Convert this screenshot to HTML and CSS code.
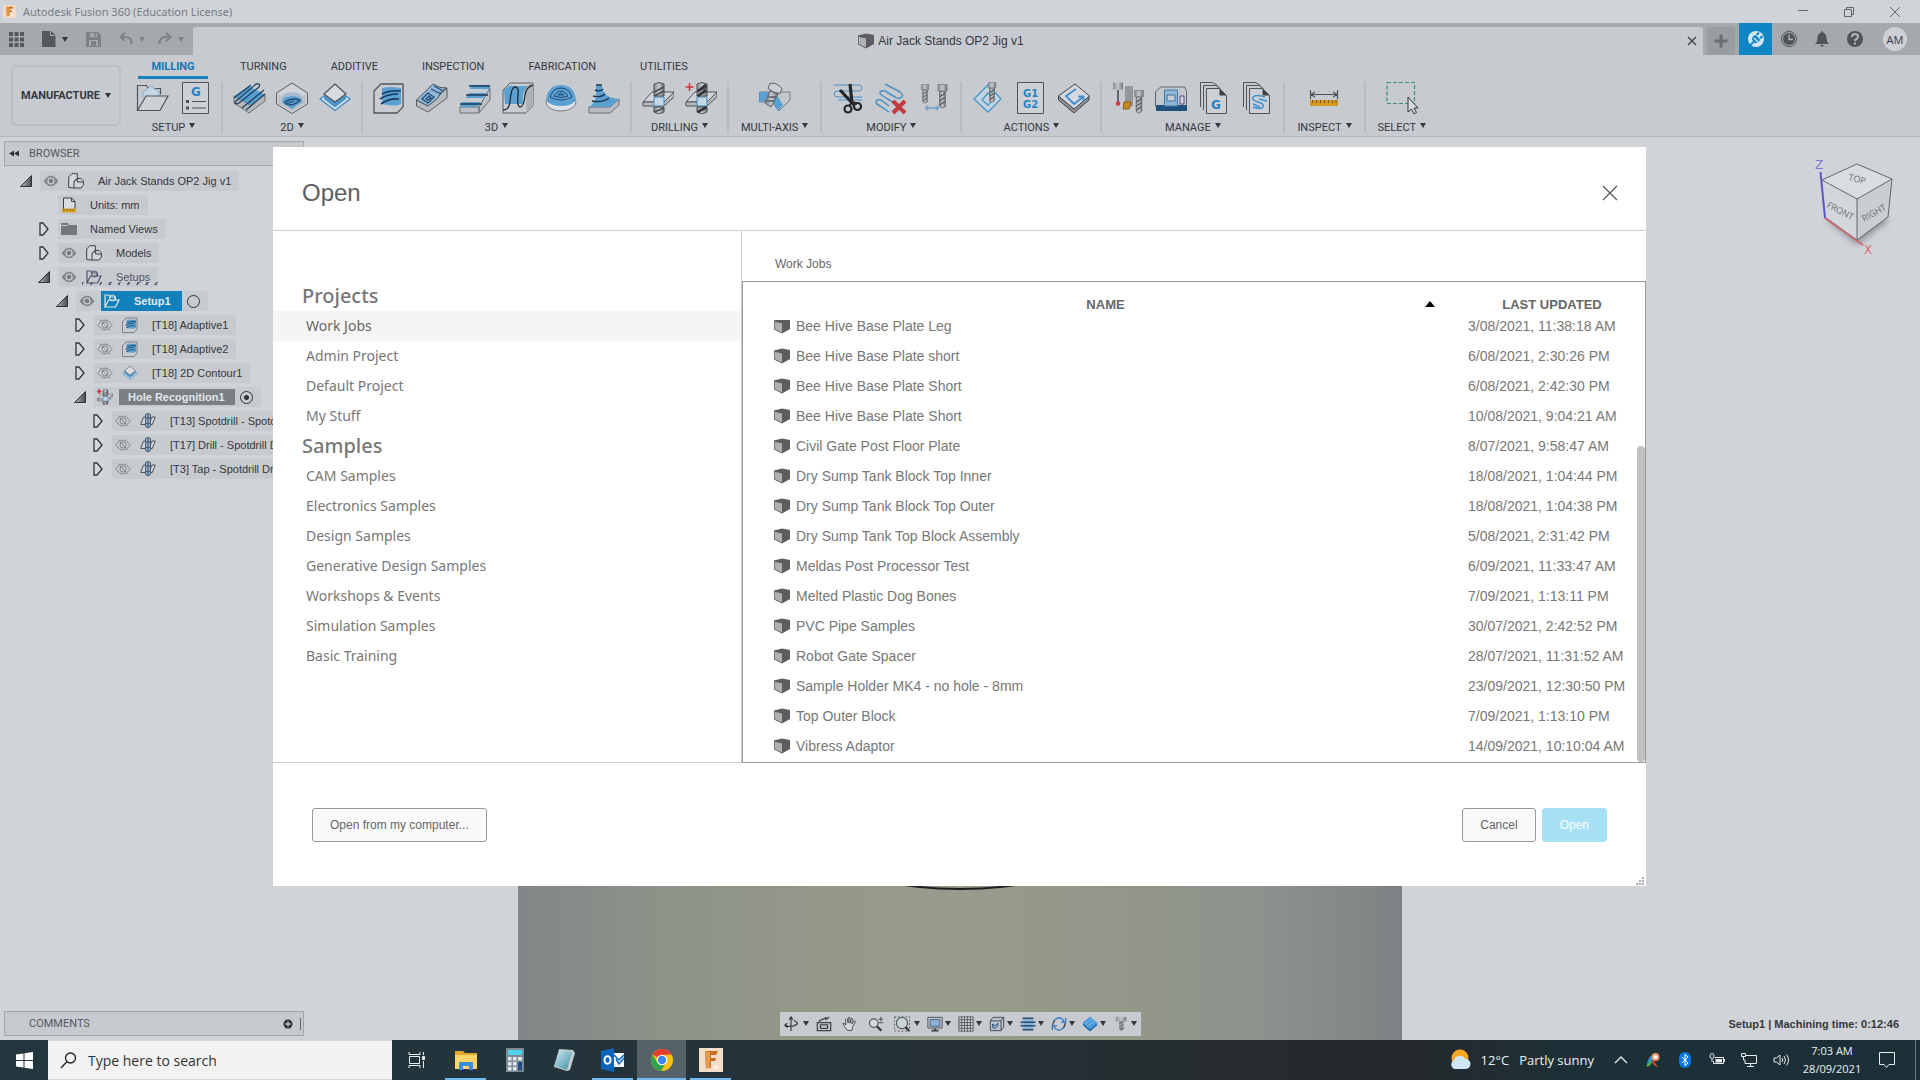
FILE: index.html
```html
<!DOCTYPE html>
<html lang="en">
<head>
    <meta charset="UTF-8">
    <meta name="viewport" content="width=device-width, initial-scale=1.0">
    <title>Autodesk Fusion 360 (Education License)</title>
    <link rel="stylesheet" href="styles.css">
</head>
<body>

    <!-- Shared icons -->
    <svg class="defs" aria-hidden="true">
        <defs>
            <linearGradient id="g-steel" x1="0" x2="1"><stop offset="0" stop-color="#8b8f94"/><stop offset=".5" stop-color="#c3c6ca"/><stop offset="1" stop-color="#74787d"/></linearGradient>
            <linearGradient id="g-tri" x1="0" x2="1"><stop offset="0" stop-color="#b5b8bc"/><stop offset="1" stop-color="#4a4d52"/></linearGradient>
            <linearGradient id="g-note" x1="0" x2="1" y2="1"><stop offset="0" stop-color="#d5eef4"/><stop offset="1" stop-color="#3f8ba3"/></linearGradient>
        </defs>
        <symbol id="cube" viewBox="0 0 16 16">
            <path d="M0 2.500 8 0.500 16 2 16 11 8 15.500 0 11.500z" fill="#5d5d60"/>
            <path d="M0.700 3.800 8 5.500V14.500L0.700 11z" fill="#b0b1b3"/>
        </symbol>
        <symbol id="eye" viewBox="0 0 16 16">
            <path d="M0.500 8Q8-2.500 15.500 8 8 18.500 0.500 8z" fill="#84888d"/>
            <circle cx="8" cy="8" r="3.600" fill="#c9ccd1"/><circle cx="8" cy="8" r="2.300" fill="#777b80"/>
        </symbol>
        <symbol id="eye-off" viewBox="0 0 16 16">
            <g fill="none" stroke="#84888d"><path d="M0.700 8Q8-2 15.300 8 8 18 0.700 8z"/><circle cx="8" cy="8" r="3"/><path d="M2.500 2.500 13.500 13.500"/></g>
        </symbol>
        <symbol id="open" viewBox="0 0 12 12"><path d="M0.500 11.500H11.500V0.500z" fill="url(#g-tri)" stroke="#2d3035"/></symbol>
        <symbol id="closed" viewBox="0 0 10 14"><path d="M1 1v12h3l5-6-5-6z" fill="#d5d8dc" stroke="#33363b" stroke-width="1.300"/></symbol>
        <symbol id="part" viewBox="0 0 16 16">
            <path d="M0.700 14.500V4L4 0.700h5.300v5L6 8.500v6.500zM6 8.500l3-3h4l2.300 2.300v4.500L13 15H6M9.300 5.500v3.500h6" fill="#d3d6da" stroke="#3d4147"/>
        </symbol>
        <symbol id="folder-open" viewBox="0 0 16 16">
            <path d="M1 14V2h4l1 2h5v3M1 14 4.500 7H15l-3.500 7z" fill="none" stroke="currentColor" stroke-width="1.200"/><circle cx="8.500" cy="5" r="3" fill="none" stroke="currentColor"/>
        </symbol>
        <symbol id="adaptive" viewBox="0 0 32 32">
            <path d="M1 9 8 2h22v23l-6 6H1z" fill="#c9ccd0" stroke="#53575c" stroke-width="1.300"/>
            <path d="M9 6q7-2 19 0v16q-5 3-19 0z" fill="#5ba1d2"/>
            <path d="M28 9Q17 8 9 12M25 12Q14 12 7 17M26 17Q16 16 8 22" fill="none" stroke="#183a5c" stroke-width="1.600"/>
        </symbol>
        <symbol id="contour" viewBox="0 0 32 32">
            <path d="M1 17 16 28.500 31 17 16 6z" fill="#d5dfe8" stroke="#3f88c0" stroke-width="1.300"/>
            <path d="M5 12v5L16 25.500 27 17v-5L16 20z" fill="#4d94c9"/>
            <path d="M16 2 27 12 16 20 5 12z" fill="#d8dbdf" stroke="#4f5358" stroke-width="1.200"/>
        </symbol>
        <symbol id="drill" viewBox="0 0 32 32">
            <path d="M1 20 10 10h22l-10 10z" fill="#d2d5d9" stroke="#4f5358"/><path d="M1 20v4h21l10-9v-5L22 20z" fill="#b6babf" stroke="#4f5358"/>
            <path d="M12 15h10v9H12z" fill="#c3d6e5" stroke="#3f88c0"/>
            <path d="M12 2q5-3 10 0v12H12zM12 25h10v5l-5 2-5-2z" fill="url(#g-steel)" stroke="#4a4e53"/>
            <path d="M12 10l10-5M12 14l10-5M12 30l10-4" stroke="#4a4e53" stroke-width="1.500"/>
        </symbol>
        <symbol id="drill-sm" viewBox="0 0 16 16">
            <path d="M0.700 11.500 3.500 4h5l-2.500 7.500zM9 11.500 12 4h3.300l-3 7.500z" fill="#cfd3d8" stroke="#4f5358"/>
            <path d="M5.500 1.500q2.500-2 5 0v12q-2.500 3-5 0z" fill="#8dadc9" stroke="#4f6172"/><path d="M8 1v14M5.500 5h5M5.500 10.500h5" stroke="#44586b"/>
        </symbol>
        <symbol id="fusion" viewBox="0 0 24 24">
            <path d="M0 0h24v24H0z" fill="#f2dcc8"/><path d="M6 3h13l-2 4h-5v3h5l-1 3h-4v7H7z" fill="#c66d1f"/><path d="M6 3l5 1v16l-4 1z" fill="#e49a4a"/><path d="M15 17h5v4h-6z" fill="#fbeede"/>
        </symbol>
        <symbol id="bit" viewBox="0 0 12 30">
            <path d="M0.500 0.500h11v8h-11z" fill="url(#g-steel)" stroke="#7b7f84"/><path d="M2.500 9h7v18l-3.500 2-3.500-2z" fill="url(#g-steel)" stroke="#63676c"/><path d="M3 15l6-4M3 20l6-4M3 25l6-4" stroke="#54585d" stroke-width="1.500"/>
        </symbol>
    </svg>

    <header class="titlebar">
        <svg class="app-icon"><use href="#fusion"/></svg>
        <h1>Autodesk Fusion 360 (Education License)</h1>
        <div class="window-buttons">
            <button aria-label="Minimize"><svg width="12" height="12"><path d="M1 4.500h10"/></svg></button>
            <button aria-label="Restore"><svg width="12" height="12"><path d="M1.500 3.500h7v7h-7zM3.500 3.500v-2h7v7h-2"/></svg></button>
            <button aria-label="Close window"><svg width="12" height="12"><path d="M1 1l10 10M11 1 1 11"/></svg></button>
        </div>
    </header>

    <div class="docbar">
        <div class="quick">
            <button aria-label="Data panel"><svg width="15" height="15" fill="#55595e"><path d="M0 0h4v4H0zM5.500 0h4v4h-4zM11 0h4v4h-4zM0 5.500h4v4H0zM5.500 5.500h4v4h-4zM11 5.500h4v4h-4zM0 11h4v4H0zM5.500 11h4v4h-4zM11 11h4v4h-4z"/></svg></button>
            <button aria-label="File"><svg width="14" height="16" fill="#55595e"><path d="M0 0h8v5h5.500v11H0zM9 0l4.500 4H9z"/></svg><span class="caret"></span></button>
            <button aria-label="Save"><svg width="15" height="15"><path d="M0 0h12l3 3v12H0z" fill="#7e8286"/><path d="M4 1h7v4H4zM3 8h9v6H3z" fill="#a5a8ac"/><path d="M5 9h5v5H5zM8 1h2v3H8z" fill="#7e8286"/></svg></button>
            <button aria-label="Undo" class="dim"><svg width="14" height="14"><path d="M6 1 1.500 5 6 9M2 5h5q5.500 0 5.500 7" fill="none" stroke="#7e8286" stroke-width="2"/></svg><span class="caret"></span></button>
            <button aria-label="Redo" class="dim"><svg width="14" height="14"><path d="M8 1l4.500 4L8 9M12 5H7q-5.500 0-5.500 7" fill="none" stroke="#7e8286" stroke-width="2"/></svg><span class="caret"></span></button>
        </div>
        <div class="doc-tab">
            <div class="doc-name"><svg width="16" height="16"><use href="#cube"/></svg>Air Jack Stands OP2 Jig v1</div>
            <button aria-label="Close document"><svg width="10" height="10"><path d="M1 1l8 8M9 1 1 9" stroke="#44484d" stroke-width="1.500"/></svg></button>
        </div>
        <button class="new-tab" aria-label="New tab"><svg width="14" height="14"><path d="M7 0.500v13M0.500 7h13" stroke="#686b70" stroke-width="3"/></svg></button>
        <div class="status">
            <button class="online" aria-label="Extensions"><svg width="18" height="18"><circle cx="9" cy="9" r="8" fill="#d5e6f1"/><path d="M5 9.500q0-3.500 3.500-4.500l4.500 4.500q-1 3.500-4.500 3.500-1.500 0-2-1z" fill="#0e85c4"/><path d="M6.500 12 2.500 16M9.500 5l2.500-2.500M13 8.500 15.500 6" stroke="#0e85c4" stroke-width="1.800"/><path d="M7 8l4 4" stroke="#d5e6f1" stroke-width="1.500"/></svg></button>
            <button aria-label="Job status"><svg width="18" height="18"><circle cx="9" cy="9" r="7.500" fill="none" stroke="#505459"/><circle cx="9" cy="9" r="6" fill="#505459"/><path d="M9 4.500V9.500h4" fill="none" stroke="#b5b8bb" stroke-width="1.300"/></svg></button>
            <button aria-label="Notifications"><svg width="14" height="16"><path d="M7 0q1 0 1 1.500 3.500 1 3.500 5.500 0 4 2.500 6H0q2.500-2 2.500-6Q2.500 2.500 6 1.500 6 0 7 0zM5 14h4l-2 2z" fill="#505459"/></svg></button>
            <button aria-label="Help"><svg width="18" height="18"><circle cx="9" cy="9" r="8" fill="#505459"/><path d="M6 7q0-3 3-3t3 2.500Q12 8 10.500 9 9 9.500 9 11M9 12.500v2" fill="none" stroke="#b5b8bb" stroke-width="2"/></svg></button>
            <button class="avatar">AM</button>
        </div>
    </div>

    <div class="ribbon">
        <button class="workspace">MANUFACTURE<span class="caret"></span></button>
        <div class="ribbon-main">
            <nav class="ribbon-tabs">
                <a href="#" class="active">MILLING</a>
                <a href="#">TURNING</a>
                <a href="#">ADDITIVE</a>
                <a href="#">INSPECTION</a>
                <a href="#">FABRICATION</a>
                <a href="#">UTILITIES</a>
            </nav>
            <div class="groups">
                <div class="group">
                    <div class="tools">
                        <svg viewBox="0 0 32 32"><path d="M1.500 28.500v-25h9l2 3h12v6" fill="none" stroke="#4f5358" stroke-width="1.200"/><path d="M7 16V10l8-6 8 6v4" fill="#c5d6e3" stroke="#7fb0d2"/><path d="M1.500 28.500 10 14h22l-8 14.500z" fill="#cdd0d5" stroke="#4f5358" stroke-width="1.200"/></svg>
                        <svg viewBox="0 0 32 32"><path d="M3.500 0.500h26v31h-26z" fill="#cdd0d5" stroke="#4f5358"/><text x="12" y="14" class="ic-g">G</text><path d="M13 19.500h14M13 26h14" stroke="#4f5358"/><path d="M7 18h3v3H7zM7 24.500h3v3H7z" fill="#4f5358"/></svg>
                    </div>
                    <button>SETUP<span class="caret"></span></button>
                </div>
                <div class="group">
                    <div class="tools">
                        <svg viewBox="0 0 32 32"><path d="M1 14v7l15 10 16-12v-7L17 23z" fill="#b3b7bc" stroke="#6b6f74"/><path d="M1 14 16 4l16 9-15 10z" fill="#559fd2"/><path d="M2 20 23 2q5-1 3 3L6 21q-4 2-4-1M9 26 31 8M13 28 32 12M1 16 18 3" fill="none" stroke="#24415c" stroke-width="1.300"/></svg>
                        <svg viewBox="0 0 32 32"><path d="M16 1 31.500 11v11L16 31.500 0.500 22V11z" fill="#d0d3d7" stroke="#5b5f64"/><path d="M2 12 16 21v9L2 21zM30 12v9l-14 9v-9z" fill="#bfc3c8"/><path d="M5 17q0-6 11-7 11 1 11 7v3l-11 8-11-8z" fill="#a9bccd"/><path d="M6 20q1-6 10-6t10 6l-10 7z" fill="#5aa1d2"/><path d="M8 21q7-6 16-3-7 7-14 4l8-3" fill="none" stroke="#1e4870" stroke-width="1.300"/></svg>
                        <svg><use href="#contour"/></svg>
                    </div>
                    <button>2D<span class="caret"></span></button>
                </div>
                <div class="group">
                    <div class="tools">
                        <svg><use href="#adaptive"/></svg>
                        <svg viewBox="0 0 32 32"><path d="M0.500 18v6L12 30l19-14V6L12 24z" fill="#b8bcc1" stroke="#5b5f64"/><path d="M0.500 18 17 2q7 5 14 4Q24 9 22 16l-10 8z" fill="#93b9d8" stroke="#4f5358"/><path d="M6 17l6-6 6 4-6 6zM10 17l3-3 2 2-3 2zM15 7l10 5M18 4l9 5" fill="none" stroke="#1f4a74" stroke-width="1.300"/></svg>
                        <svg viewBox="0 0 32 32"><path d="M1 31V25h19v6zM20 31l11-13V6L20 25z" fill="#bec2c7" stroke="#6b6f74"/><path d="M3 20h18l-3 5H1zM10 11h17l-3 5H7zM13 3h18v4H11z" fill="#5aa1d2"/><path d="M1 22h22M7 13h22M10 4h21" stroke="#1d3754" stroke-width="1.600"/></svg>
                        <svg viewBox="0 0 32 32"><path d="M1 31V8l7-7h23v23l-7 7z" fill="#c9ccd0" stroke="#5b5f64"/><path d="M24 31V10q1-7 7-9v23z" fill="#aeb2b7"/><path d="M2 8q6-6 8-4h16q-4 3-5 10v8H3z" fill="#5aa1d2"/><path d="M1 28q6 0 7-8Q9 5 13 5q4 0 3 8-1 12 2 12 4 0 5-12 1-8 8-10" fill="none" stroke="#24303c" stroke-width="1.400"/></svg>
                        <svg viewBox="0 0 32 32"><ellipse cx="16" cy="20" rx="15" ry="9" fill="#e0e3e6" stroke="#7b7f84"/><path d="M1 18Q3 3 16 3t15 15q-4 6-15 6T1 18z" fill="#5aa1d2"/><path d="M5 15q3-9 11-9t11 9q-11 6-22 0zM9 14q3-5 7-5t7 5q-7 3-14 0zM13 13l3-2 3 2z" fill="none" stroke="#1f4a74"/></svg>
                        <svg viewBox="0 0 32 32"><path d="M1 25v6h21l9-8v-6l-9 8z" fill="#b8bcc1" stroke="#6b6f74"/><path d="M1 25q5-3 7-10V4q3-3 6 0 1 12 17 13l-9 8z" fill="#5aa1d2"/><path d="M7 8q5 2 8-1M5 14q8 2 12-2M4 19q11 2 17-3M8 3h6" fill="none" stroke="#20364c" stroke-width="1.400"/></svg>
                    </div>
                    <button>3D<span class="caret"></span></button>
                </div>
                <div class="group">
                    <div class="tools">
                        <svg><use href="#drill"/></svg>
                        <svg viewBox="0 0 32 32"><use href="#drill" width="32" height="32"/><path d="M13 9l8-6M13 14l8-6M13 30l8-5" stroke="#2e3136" stroke-width="2.500"/><path d="M4.500 1v8M0.500 5h8" stroke="#cf3340" stroke-width="1.500"/></svg>
                    </div>
                    <button>DRILLING<span class="caret"></span></button>
                </div>
                <div class="group">
                    <div class="tools">
                        <svg viewBox="0 0 32 32"><path d="M0.500 10H31v8L20 29l-7-9H0.500z" fill="#c3c7cb" stroke="#777b80"/><path d="M0.500 10H16l8 13-5 6-6-9H0.500z" fill="#5aa1d2"/><path d="M11 1.500q6-2 12 5l-2 5q-6 0-12-5z" fill="#cdd0d4" stroke="#5b5f64"/><path d="M11 9l8 3-7 13-6-4z" fill="url(#g-steel)" stroke="#5b5f64"/><path d="M9 15l8 0M7 19l8 0" stroke="#5b5f64" stroke-width="1.500"/></svg>
                    </div>
                    <button>MULTI-AXIS<span class="caret"></span></button>
                </div>
                <div class="group">
                    <div class="tools">
                        <svg viewBox="0 0 32 32"><path d="M2 3h25q3 0 3 3t-3 3H6q-4 0-4 3t4 3h24M6 18h24" fill="none" stroke="#4a90c4"/><path d="M18 2 20 21M8 8 22 23" stroke="#23272c" stroke-width="3.200"/><path d="M20 20l-3 4M21 20l4 2" stroke="#23272c" stroke-width="2"/><circle cx="16" cy="27" r="3.500" fill="none" stroke="#23272c" stroke-width="2.200"/><circle cx="25.500" cy="24.500" r="3.500" fill="none" stroke="#23272c" stroke-width="2.200"/></svg>
                        <svg viewBox="0 0 32 32"><path d="M10 2 25 10q5 4 0 6-2 1-5-1L10 9q-5-1-5 2 0 1 3 3l11 7M14 24 6 18q-5-1-5 2 0 2 4 4l9 6" fill="none" stroke="#4a90c4" stroke-width="1.500"/><path d="M18 19 30 31M30 19 18 31" stroke="#c23a3f" stroke-width="4"/></svg>
                        <svg viewBox="0 0 32 32"><use href="#bit" x="1" y="2" width="12" height="20"/><use href="#bit" x="18" y="2" width="13" height="25"/><path d="M8 26h12M10 23.500 7.500 26l2.500 2.500M18 23.500l2.500 2.500-2.500 2.500" fill="none" stroke="#3f88c0"/></svg>
                    </div>
                    <button>MODIFY<span class="caret"></span></button>
                </div>
                <div class="group">
                    <div class="tools">
                        <svg viewBox="0 0 32 32"><path d="M16 3 29 17 16 30 2 17z M16 11l6 6-6 6-6-5z" fill="#c5d3de" stroke="#4796cb" stroke-width="1.300"/><use href="#bit" x="14" y="0" width="12" height="21"/></svg>
                        <svg viewBox="0 0 32 32"><path d="M2.500 0.500h26v31h-26z" fill="#cdd0d5" stroke="#4f5358"/><text x="8" y="15" class="ic-g sm">G1</text><text x="8" y="26" class="ic-g sm">G2</text></svg>
                        <svg viewBox="0 0 32 32"><path d="M0.500 14v4L16 31l15-13v-4L16 27z" fill="#8f9398" stroke="#3f4348"/><path d="M17 2 31.500 14 16 27 0.500 14z" fill="#d5d8dd" stroke="#3f4348"/><path d="M18 7 8 14l8 8 9-7M20 14.500h5.500V20" fill="none" stroke="#3f8fd0" stroke-width="1.800"/></svg>
                    </div>
                    <button>ACTIONS<span class="caret"></span></button>
                </div>
                <div class="group">
                    <div class="tools">
                        <svg viewBox="0 0 32 32"><path d="M1 0.500h10v7H1z" fill="url(#g-steel)"/><path d="M6 8v12" stroke="#63676c" stroke-width="2"/><circle cx="6" cy="21.500" r="2.300" fill="#d8333e"/><path d="M13 4h8v20l-8 3z" fill="#94989d"/><path d="M12 20l7 0-2 7h-6z" fill="#c98a21" stroke="#8c5f14"/><use href="#bit" x="21" y="8" width="12" height="24"/></svg>
                        <svg viewBox="0 0 32 32"><path d="M0.500 24V10l5-5h24l2 4v15z" fill="#c3c8ce" stroke="#63676c"/><path d="M1 23h31v6H1z" fill="#20507c"/><path d="M9.500 8h13v16h-13z" fill="#8fb6d6" stroke="#3f79a8"/><path d="M12 13h8v6h-8z" fill="#c3d0db" stroke="#3f6f98"/><path d="M25 14h4v8h-4z" fill="#d5d8dc" stroke="#5c4a7c"/></svg>
                        <svg viewBox="0 0 32 32"><path d="M2.500 25V0.500h12l5 3M5.500 28V3.500h12l5 3" fill="none" stroke="#4f5358"/><path d="M8.500 6.500h13l7 7v18h-20z" fill="#cdd0d5" stroke="#4f5358"/><path d="M21.500 6.500v7h7z" fill="#3f4348"/><text x="13" y="27" class="ic-g">G</text></svg>
                        <svg viewBox="0 0 32 32"><path d="M2.500 25V0.500h12l5 3M5.500 28V3.500h12l5 3" fill="none" stroke="#4f5358"/><path d="M8.500 6.500h13l7 7v18h-20z" fill="#cdd0d5" stroke="#4f5358"/><path d="M21.500 6.500v7h7z" fill="#3f4348"/><path d="M24 15q-9-3-12 0-2 3 5 5 7 2 5 5-1 3-10 0M26 19l-8-2M12 22l7 3" fill="none" stroke="#3f8fd0" stroke-width="1.500"/></svg>
                    </div>
                    <button>MANAGE<span class="caret"></span></button>
                </div>
                <div class="group">
                    <div class="tools">
                        <svg viewBox="0 0 32 32"><path d="M2 18h28v6H2z" fill="#d69a1e"/><path d="M4.500 18v3M8.500 18v3M12.500 18v3M16.500 18v3M20.500 18v3M24.500 18v3M28 18v3" stroke="#6e5a1c"/><path d="M2.500 8v9M29.500 8v9M4 12.500h24M7 10l-4 2.500L7 15M25 10l4 2.500-4 2.500" fill="none" stroke="#4f5358" stroke-width="1.200"/></svg>
                    </div>
                    <button>INSPECT<span class="caret"></span></button>
                </div>
                <div class="group">
                    <div class="tools">
                        <svg viewBox="0 0 32 32"><path d="M1 0.500h27.500V21.500H1z" fill="none" stroke="#3f9168" stroke-width="1.200" stroke-dasharray="4 2"/><path d="M22 15v15l3.500-3 2.500 5 2.500-1.500-2.500-4.500h4z" fill="#d8dbdf" stroke="#33373c"/></svg>
                    </div>
                    <button>SELECT<span class="caret"></span></button>
                </div>
            </div>
        </div>
    </div>

    <main class="viewport">
        <div class="model"></div>

        <section class="browser">
            <div class="panel-bar">
                <svg width="10" height="8"><path d="M5 0.500v6L0 3.500zM10 0.500v6L5 3.500z" fill="#2f3338"/></svg>
                BROWSER
            </div>
            <ul class="tree">
                <li class="l0"><svg class="tw"><use href="#open"/></svg><div class="node"><svg><use href="#eye"/></svg><svg><use href="#part"/></svg><span>Air Jack Stands OP2 Jig v1</span></div></li>
                <li class="l1"><i class="tw"></i><div class="node short"><svg viewBox="0 0 16 16"><path d="M2.500 12V1h8l3.500 3.500V12" fill="#d8dbdf" stroke="#3d4147"/><path d="M10.500 1v3.500H14" fill="none" stroke="#3d4147"/><path d="M1 11.500h14v4H1z" fill="#d9a521"/><path d="M3 12v2M6 12v2M9 12v2M12 12v2" stroke="#6e5a1c"/></svg><span>Units: mm</span></div></li>
                <li class="l1"><svg class="tw"><use href="#closed"/></svg><div class="node short"><svg viewBox="0 0 16 16"><path d="M0 2h7l1 2h8v10H0z" fill="#74787d"/><path d="M0 4.500h7" stroke="#c7cacf"/></svg><span>Named Views</span></div></li>
                <li class="l1"><svg class="tw"><use href="#closed"/></svg><div class="node"><svg><use href="#eye"/></svg><svg><use href="#part"/></svg><span>Models</span></div></li>
                <li class="l1"><svg class="tw"><use href="#open"/></svg><div class="node stale"><svg><use href="#eye"/></svg><svg><use href="#folder-open"/></svg><span>Setups</span></div></li>
                <li class="l2"><svg class="tw"><use href="#open"/></svg><div class="node"><svg><use href="#eye"/></svg><b class="picked"><svg><use href="#folder-open"/></svg>Setup1</b><input type="radio" name="active" aria-label="Activate Setup1"></div></li>
                <li class="l3"><svg class="tw"><use href="#closed"/></svg><div class="node"><svg><use href="#eye-off"/></svg><svg><use href="#adaptive"/></svg><span>[T18] Adaptive1</span></div></li>
                <li class="l3"><svg class="tw"><use href="#closed"/></svg><div class="node"><svg><use href="#eye-off"/></svg><svg><use href="#adaptive"/></svg><span>[T18] Adaptive2</span></div></li>
                <li class="l3"><svg class="tw"><use href="#closed"/></svg><div class="node"><svg><use href="#eye-off"/></svg><svg><use href="#contour"/></svg><span>[T18] 2D Contour1</span></div></li>
                <li class="l3"><svg class="tw"><use href="#open"/></svg><div class="node"><svg viewBox="0 0 32 32"><use href="#drill" width="32" height="32"/><path d="M4.500 0v10M0 5h9" stroke="#cf3340" stroke-width="3"/></svg><b class="grayed">Hole Recognition1</b><input type="radio" name="active" aria-label="Activate Hole Recognition1" checked></div></li>
                <li class="l4"><svg class="tw"><use href="#closed"/></svg><div class="node"><svg><use href="#eye-off"/></svg><svg><use href="#drill-sm"/></svg><span>[T13] Spotdrill - Spotdrill</span></div></li>
                <li class="l4"><svg class="tw"><use href="#closed"/></svg><div class="node"><svg><use href="#eye-off"/></svg><svg><use href="#drill-sm"/></svg><span>[T17] Drill - Spotdrill Drill</span></div></li>
                <li class="l4"><svg class="tw"><use href="#closed"/></svg><div class="node"><svg><use href="#eye-off"/></svg><svg><use href="#drill-sm"/></svg><span>[T3] Tap - Spotdrill Drill</span></div></li>
            </ul>
        </section>

        <svg class="viewcube" width="80" height="110" viewBox="0 0 80 110">
            <defs><filter id="soft" x="-30%" y="-30%" width="160%" height="160%"><feGaussianBlur stdDeviation="3"/></filter></defs>
            <path d="M12 65 46 50 74 65 42 90z" fill="#8f9398" filter="url(#soft)"/>
            <path d="M7 25 42 9l35 15-35 20z" fill="#d9dce1"/><path d="M7 25l35 19v41L11 63z" fill="#d3d6db"/><path d="M77 24 42 44v41l31-23z" fill="#caced3"/>
            <path d="M7 25 42 9l35 15-35 20zM42 44v41l31-23 4-38M42 85 11 63" fill="none" stroke="#63676c"/>
            <path d="M5.500 17 10 63" stroke="#5a57c4" stroke-width="2"/><path d="M10 63 48 90" stroke="#c66b76" stroke-width="2"/>
            <text x="0" y="14" class="axis z">Z</text><text x="49" y="99" class="axis x">X</text>
            <g class="face"><text transform="translate(33 25) rotate(14)">TOP</text><text transform="translate(11 52) rotate(27)">FRONT</text><text transform="translate(49 67) rotate(-29)">RIGHT</text></g>
        </svg>

        <div class="bottom">
            <div class="panel-bar comments">COMMENTS
                <svg width="20" height="12"><circle cx="5" cy="6" r="4.500" fill="#2f3338"/><path d="M5 3.500v5M2.500 6h5" stroke="#c7cacf" stroke-width="1.300"/><path d="M17.500 0v12" stroke="#63676c"/></svg>
            </div>
            <div class="navbar">
                <button class="wide" aria-label="Orbit"><svg viewBox="0 0 18 18"><path d="M9 1v16M7 4l2-3 2 3M12 5q5 2 4 4-7 5-14 1M5 8 2 10.500 5 13" fill="none" stroke="#33373c" stroke-width="1.300"/></svg><span class="caret"></span></button>
                <button aria-label="Look at"><svg viewBox="0 0 18 18"><path d="M1.500 7.500h15v9h-15zM5 10h8v4H5zM3 6l8-4v2l4-3" fill="none" stroke="#3f4348" stroke-width="1.400"/></svg></button>
                <button aria-label="Pan"><svg viewBox="0 0 18 18"><path d="M6 16Q2 11 1 8.500q1-1.500 3.500 1.500L4 4q1-2 2 0l1 4V2q1-1.500 2 0v6l1.500-5q1.500-1 1.500 1l-1 5 3-3.500q1.500 0 1 1.500L12 12l-1 4.500z" fill="#d5d8dc" stroke="#3f4348"/></svg></button>
                <button aria-label="Zoom"><svg viewBox="0 0 18 18"><circle cx="6.500" cy="8" r="4.800" fill="#d2dadd" stroke="#4f5358" stroke-width="1.300"/><path d="M10 11.500l5 5" stroke="#2f3338" stroke-width="2.500"/><path d="M14.500 1v5M12 3.500h5M12 7.500h5" stroke="#3f4348"/></svg></button>
                <button class="wide" aria-label="Zoom window"><svg viewBox="0 0 18 18"><path d="M0.500 1v16h17V1z" fill="none" stroke="#4f5358" stroke-dasharray="2 2"/><circle cx="9" cy="8" r="6.300" fill="#c9d5d5" stroke="#4f5358" stroke-width="1.300"/><path d="M13 12.500l4 4.500" stroke="#2f3338" stroke-width="2.500"/></svg><span class="caret"></span></button>
                <button aria-label="Display settings"><svg viewBox="0 0 18 18"><path d="M1 1.500h16v12H1z" fill="#c7cacf" stroke="#3f4348"/><path d="M3.500 4h11v7.500h-11z" fill="#8fb0d0" stroke="#3c5f84"/><path d="M5 16.500h8M9 14v2" stroke="#3f4348" stroke-width="2"/></svg><span class="caret"></span></button>
                <button aria-label="Grid and snaps"><svg viewBox="0 0 18 18"><path d="M1 1h16v16H1zM1 4.200h16M1 7.400h16M1 10.600h16M1 13.800h16M4.200 1v16M7.400 1v16M10.600 1v16M13.800 1v16" fill="#d5d8dc" stroke="#4f5358"/></svg><span class="caret"></span></button>
                <button aria-label="Viewports"><svg viewBox="0 0 18 18"><path d="M1.500 5.500l3-4h12v11l-3 4h-12z" fill="#b8c4d0" stroke="#3f4348"/><path d="M1.500 5.500h12v11M13.500 5.500l3-4" fill="none" stroke="#3f4348"/><path d="M4 13V9l3 2 3-3v3l-3 3z" fill="#8fb0d0" stroke="#2c4a6c"/></svg><span class="caret"></span></button>
                <button aria-label="Passes"><svg viewBox="0 0 18 18"><path d="M3 2h12v14H3z" fill="#8ab0d6"/><path d="M3 2.500h12M0.500 7h17M0.500 11h17M3 15.500h12" stroke="#2c4a6c" stroke-width="1.500"/></svg><span class="caret"></span></button>
                <button aria-label="Regenerate"><svg viewBox="0 0 18 18"><path d="M3 6q6-8 12 0M16.500 2v5h-5M15 12q-6 8-12 0M1.500 16v-5h5" fill="none" stroke="#3f7fbf" stroke-width="1.500"/><path d="M2 10q0-3 2-5M16 8q0 3-2 5" fill="none" stroke="#33475c" stroke-width="1.500"/></svg><span class="caret"></span></button>
                <button aria-label="Stock"><svg viewBox="0 0 18 18"><path d="M0.500 10 9 17.500 17.500 10 9 3z" fill="#1f6fb2"/><path d="M0.500 8 9 0.500l8.500 7.500L9 15z" fill="#4a9ad8"/><path d="M3 9l9-6M6 11.500l9-6" stroke="#8fc3ea"/></svg><span class="caret"></span></button>
                <button aria-label="Tool display"><svg viewBox="0 0 18 18"><path d="M3 1h12v5H3z" fill="url(#g-steel)"/><path d="M7 6h5v9l-2.500 2L7 15z" fill="#74787d"/><path d="M7 10l5-2M7 13l5-2" stroke="#b9bcc1"/></svg><span class="caret"></span></button>
            </div>
            <p class="machining">Setup1 | Machining time: 0:12:46</p>
        </div>
    </main>

    <footer class="taskbar">
        <button class="start" aria-label="Start"><svg width="17" height="17" fill="#fff"><path d="M0 2.500 7.500 1.500V8H0zM8.500 1.300 17 0v8H8.500zM0 9h7.500v6.500L0 14.500zM8.500 9H17v8l-8.500-1.200z"/></svg></button>
        <label class="search">
            <svg width="17" height="17"><circle cx="10.500" cy="6" r="5" fill="none" stroke="#222" stroke-width="1.300"/><path d="M7 9.500 1 16" stroke="#222" stroke-width="1.300"/></svg>
            <input type="text" placeholder="Type here to search" aria-label="Type here to search">
        </label>
        <div class="apps">
            <button aria-label="Task view"><svg width="18" height="18" fill="none" stroke="#e8ecee"><path d="M1.500 5.500h10v7h-10zM1 1v2.500h11V1M1 17v-2.500h11V17M15.500 1v3M15.500 10v7"/><path d="M14.500 5.500h2v3h-2z" fill="#e8ecee"/></svg></button>
            <button class="running" aria-label="File Explorer"><svg width="24" height="24"><path d="M1 3h8l2 2h12v15H1z" fill="#e3a92c"/><path d="M1 7h22v14H1z" fill="#fbd567"/><path d="M5 22v-8h14v8h-4v-4H9v4z" fill="#3a8fd4"/></svg></button>
            <button aria-label="Calculator"><svg width="20" height="24"><path d="M1 0h18v24H1z" fill="#7d8a94"/><path d="M3 2h14v5H3z" fill="#4fd0ee"/><path d="M3 9h3.500v3.500H3zM8 9h3.500v3.500H8zM13 9h4v3.500h-4zM3 14h3.500v3.500H3zM8 14h3.500v3.500H8zM3 19h3.500v3.500H3zM8 19h3.500v3.500H8z" fill="#e3e8eb"/><path d="M13 14h4v8.500h-4z" fill="#1f4f86"/></svg></button>
            <button aria-label="Notes"><svg width="24" height="24"><path d="M7 1l14 1 2 3-5 17-3 1L2 19z" fill="#c4cbce"/><path d="M8 2l12 2-5 18L2 18z" fill="url(#g-note)"/></svg></button>
            <button class="running" aria-label="Outlook"><svg width="24" height="24"><path d="M12 5h11v14H12z" fill="#f4f8fb"/><path d="M13 7l5 5 5-5M15 11l3 5 5-6" fill="none" stroke="#0f6cbd" stroke-width="1.500"/><path d="M0 3l13-3v24L0 21z" fill="#0a64b8"/><ellipse cx="6.500" cy="12" rx="3" ry="3.800" fill="none" stroke="#fff" stroke-width="2"/></svg></button>
            <button class="running current" aria-label="Chrome"><svg width="24" height="24"><circle cx="12" cy="12" r="11" fill="#fbc116"/><path d="M2.500 6.500A11 11 0 0 1 21.500 6.500H12z" fill="#e33b2e"/><path d="M2.500 6.500A11 11 0 0 0 11 23l5-8.500-9-.5z" fill="#2fa24c"/><path d="M12 6.500h9.500Q12 7 7 9L2.500 6.500 8 3z" fill="#e33b2e"/><circle cx="12" cy="12" r="5.300" fill="#fff"/><circle cx="12" cy="12" r="4.200" fill="#4285f4"/></svg></button>
            <button class="running" aria-label="Fusion 360"><svg width="24" height="24"><use href="#fusion"/></svg></button>
        </div>
        <div class="tray">
            <button class="weather"><svg width="22" height="22"><circle cx="11" cy="9" r="8.500" fill="#f7a823"/><path d="M5 20a5 5 0 0 1 0-9 6 6 0 0 1 11-1 5 5 0 0 1 1 10z" fill="#cfe6f8"/></svg><span>12°C</span><span>Partly sunny</span></button>
            <button aria-label="Show hidden icons"><svg width="16" height="16"><path d="M2 11l6-6 6 6" fill="none" stroke="#e8ecee" stroke-width="1.300"/></svg></button>
            <button aria-label="Remote support"><svg width="16" height="16"><path d="M2 14Q2 4 9 3l-3 9z" fill="#2f8fd4"/><path d="M1 14q3 2 6-3l-1-3z" fill="#4cae3c"/><path d="M8 8l5 7-3-1-3-4z" fill="#dc4a2c"/><circle cx="10.500" cy="5" r="4" fill="#f0946b"/><circle cx="10.500" cy="5" r="2" fill="#fff"/></svg></button>
            <button aria-label="Bluetooth"><svg width="16" height="16"><rect x="2" width="12" height="16" rx="6" fill="#0a78e0"/><path d="M5 5l6 6-3 2.500v-11L11 5l-6 6" fill="none" stroke="#fff"/></svg></button>
            <button aria-label="Battery"><svg width="16" height="16"><path d="M6 5.500h8.500v6H4.500V9M15.500 7v3M1 3v2.500q2 2 4 0V3M2 1v2M4 1v2M3 7v3" fill="none" stroke="#e8ecee"/><path d="M6.500 7h6.500v3.500H6.500z" fill="#e8ecee"/></svg></button>
            <button aria-label="Network"><svg width="16" height="16"><path d="M5 3.500h10.500v8H4V8M9.500 12v2.500M6 14.500h7M0.500 1.500h4v3h-4zM2.500 5v3h1.500" fill="none" stroke="#e8ecee"/></svg></button>
            <button aria-label="Volume"><svg width="16" height="16"><path d="M1 6h2.500L7 3v10l-3.500-3H1zM9 6q1.500 2 0 4M11 4q3 4 0 8M13.500 2.500q4 5.500 0 11" fill="none" stroke="#e8ecee"/></svg></button>
            <div class="clock"><time>7:03 AM</time><time>28/09/2021</time></div>
            <button class="notify" aria-label="Notifications panel"><svg width="18" height="18"><path d="M1.500 1.500h15v12H11l-2.500 3-2.500-3H1.500z" fill="none" stroke="#e8ecee"/></svg></button>
        </div>
    </footer>

    <!-- Open dialog -->
    <div class="dialog" role="dialog" aria-labelledby="dialog-title">
        <div class="dialog-head">
            <h2 id="dialog-title">Open</h2>
            <button aria-label="Close"><svg width="16" height="16"><path d="M1 1l14 14M15 1 1 15" stroke="#555" stroke-width="1.200"/></svg></button>
        </div>
        <div class="dialog-body">
            <nav class="places">
                <h3>Projects</h3>
                <a href="#" class="active">Work Jobs</a>
                <a href="#">Admin Project</a>
                <a href="#">Default Project</a>
                <a href="#">My Stuff</a>
                <h3>Samples</h3>
                <a href="#">CAM Samples</a>
                <a href="#">Electronics Samples</a>
                <a href="#">Design Samples</a>
                <a href="#">Generative Design Samples</a>
                <a href="#">Workshops &amp; Events</a>
                <a href="#">Simulation Samples</a>
                <a href="#">Basic Training</a>
            </nav>
            <div class="files">
                <div class="crumb">Work Jobs</div>
                <div class="list-frame">
                    <div class="list" id="list">
                        <table>
                            <thead>
                                <tr><th>NAME<span class="sort"></span></th><th class="date">LAST UPDATED</th></tr>
                            </thead>
                            <tbody>
                                <tr><td><svg><use href="#cube"/></svg>Bee Hive Base Plate Leg</td><td>3/08/2021, 11:38:18 AM</td></tr>
                                <tr><td><svg><use href="#cube"/></svg>Bee Hive Base Plate short</td><td>6/08/2021, 2:30:26 PM</td></tr>
                                <tr><td><svg><use href="#cube"/></svg>Bee Hive Base Plate Short</td><td>6/08/2021, 2:42:30 PM</td></tr>
                                <tr><td><svg><use href="#cube"/></svg>Bee Hive Base Plate Short</td><td>10/08/2021, 9:04:21 AM</td></tr>
                                <tr><td><svg><use href="#cube"/></svg>Civil Gate Post Floor Plate</td><td>8/07/2021, 9:58:47 AM</td></tr>
                                <tr><td><svg><use href="#cube"/></svg>Dry Sump Tank Block Top Inner</td><td>18/08/2021, 1:04:44 PM</td></tr>
                                <tr><td><svg><use href="#cube"/></svg>Dry Sump Tank Block Top Outer</td><td>18/08/2021, 1:04:38 PM</td></tr>
                                <tr><td><svg><use href="#cube"/></svg>Dry Sump Tank Top Block Assembly</td><td>5/08/2021, 2:31:42 PM</td></tr>
                                <tr><td><svg><use href="#cube"/></svg>Meldas Post Processor Test</td><td>6/09/2021, 11:33:47 AM</td></tr>
                                <tr><td><svg><use href="#cube"/></svg>Melted Plastic Dog Bones</td><td>7/09/2021, 1:13:11 PM</td></tr>
                                <tr><td><svg><use href="#cube"/></svg>PVC Pipe Samples</td><td>30/07/2021, 2:42:52 PM</td></tr>
                                <tr><td><svg><use href="#cube"/></svg>Robot Gate Spacer</td><td>28/07/2021, 11:31:52 AM</td></tr>
                                <tr><td><svg><use href="#cube"/></svg>Sample Holder MK4 - no hole - 8mm</td><td>23/09/2021, 12:30:50 PM</td></tr>
                                <tr><td><svg><use href="#cube"/></svg>Top Outer Block</td><td>7/09/2021, 1:13:10 PM</td></tr>
                                <tr><td><svg><use href="#cube"/></svg>Vibress Adaptor</td><td>14/09/2021, 10:10:04 AM</td></tr>
                            </tbody>
                        </table>
                    </div>
                    <div class="scrollbar"><div class="thumb"></div></div>
                </div>
            </div>
        </div>
        <div class="dialog-foot">
            <button>Open from my computer...</button>
            <div class="actions">
                <button>Cancel</button>
                <button class="primary" disabled>Open</button>
            </div>
        </div>
        <svg class="grip" width="10" height="10" fill="#aaa"><path d="M7 1h2v2H7zM4 4h2v2H4zM7 4h2v2H7zM1 7h2v2H1zM4 7h2v2H4zM7 7h2v2H7z"/></svg>
    </div>

    <script>
        // Start at the end of the list
        const list = document.getElementById('list');
        list.scrollTop = list.scrollHeight;
    </script>

</body>
</html>
```
FILE: styles.css
```css
* { margin: 0; padding: 0; box-sizing: border-box; }

body {
    display: flex;
    flex-direction: column;
    height: 100vh;
    overflow: hidden;
    position: relative;
    background: #d0d3d8;
    color: #34383d;
    font-family: "Liberation Sans", Arial, sans-serif;
    font-size: 11px;
}

button {
    display: flex;
    align-items: center;
    justify-content: center;
    background: none;
    border: none;
    color: inherit;
    font: inherit;
}

a { color: inherit; text-decoration: none; }
svg { display: block; flex: none; }
.defs { position: absolute; width: 0; height: 0; }

.caret {
    width: 6px;
    border: 3px solid transparent;
    border-top: 5px solid #33373c;
    border-bottom: 0;
}

/* Title bar */
.titlebar {
    display: flex;
    align-items: center;
    height: 23px;
    padding-left: 3px;
    background: #d0d4d9;
}
.app-icon { width: 13px; height: 13px; }
.titlebar h1 {
    flex: 1;
    margin-left: 7px;
    color: #777b80;
    font: 11px "Noto Sans", sans-serif;
}
.window-buttons { display: flex; padding-right: 2px; }
.window-buttons button { width: 46px; height: 20px; }
.window-buttons svg { fill: none; stroke: #63676c; }

/* Document bar */
.docbar {
    display: flex;
    height: 32px;
    background: #a5a8ac;
}
.quick {
    display: flex;
    align-items: center;
    gap: 18px;
    width: 193px;
    padding-left: 9px;
}
.quick button { gap: 6px; }
.quick .dim { margin-right: -5px; }
.dim .caret { border-top-color: #7e8286; }
.doc-tab {
    display: flex;
    flex: 1;
    align-items: center;
    margin-top: 4px;
    padding-right: 6px;
    background: #c7cacf;
    border-radius: 3px 3px 0 0;
}
.doc-name {
    display: flex;
    flex: 1;
    align-items: center;
    justify-content: center;
    gap: 4px;
    padding-left: 2px;
    font-size: 12px;
}
.new-tab {
    width: 28px;
    margin: 4px 4px 0 4px;
    background: #999ca0;
    border-radius: 3px 3px 0 0;
}
.status { display: flex; align-items: center; }
.status button { width: 33px; height: 32px; }
.status .online { background: #0e85c4; }
.status .avatar {
    width: 24px;
    height: 24px;
    margin: 0 13px 0 12px;
    border-radius: 50%;
    background: #cdd0d5;
    font: 11px "Open Sans", sans-serif;
}

/* Ribbon */
.ribbon {
    display: flex;
    gap: 15px;
    padding-left: 11px;
    height: 82px;
    background: #c7cacf;
    border-bottom: 1px solid #b3b6bb;
    font: 11px Roboto, sans-serif;
}
.workspace {
    gap: 5px;
    width: 110px;
    height: 61px;
    margin-top: 10px;
    border: 2px solid #bbbec3;
    border-radius: 5px;
    font-weight: 700;
}
.ribbon-tabs { display: flex; gap: 20px; padding-left: 2px; }
.ribbon-tabs a {
    min-width: 70px;
    height: 24px;
    padding: 0 12px;
    border-bottom: 3px solid transparent;
    line-height: 23px;
    text-align: center;
}
.ribbon-tabs .active {
    color: #1478b4;
    border-bottom-color: #1783bd;
    font-weight: 700;
}
.groups { display: flex; margin-top: 3px; }
.group { padding-right: 10px; }
.group + .group {
    height: 51px;
    padding-left: 10px;
    border-left: 2px solid #b9bcc1;
}
.tools { display: flex; justify-content: center; gap: 11px; }
.tools svg { width: 32px; height: 32px; overflow: visible; }
.group button {
    width: 100%;
    height: 26px;
    padding: 0 2px;
    gap: 4px;
}
.group .caret { margin-bottom: 3px; }
.ic-g { font: 700 12px "DejaVu Sans", sans-serif; fill: #2583c4; }
.ic-g.sm { font-size: 10px; }

/* Canvas */
.viewport {
    display: flex;
    flex: 1;
    flex-direction: column;
    justify-content: space-between;
    position: relative;
    min-height: 0;
    padding: 4px 0;
}
.model {
    position: absolute;
    top: 300px;
    bottom: 0;
    left: 27%;
    right: 27%;
    overflow: hidden;
    background: linear-gradient(90deg, #828688, #8d9289 15%, #95998a 35%, #979b8b 50%, #93978a 70%, #8c918d 85%, #7e8284);
}
/* lower edge of the bore */
.model::after {
    content: "";
    position: absolute;
    top: 212px;
    left: 50%;
    width: 440px;
    height: 239px;
    margin-left: -220px;
    border-bottom: 2px solid #1d1f1e;
    border-radius: 50%;
}

/* Browser tree */
.browser { position: relative; }
.panel-bar {
    display: flex;
    align-items: center;
    gap: 10px;
    width: 300px;
    height: 25px;
    margin-left: 4px;
    padding-left: 4px;
    background: #c6c9ce;
    border: 1px solid #a2a5aa;
    color: #55595e;
    font: 11px Roboto, sans-serif;
}
.tree {
    display: flex;
    flex-direction: column;
    gap: 4px;
    margin-top: 5px;
    list-style: none;
}
.tree li { display: flex; align-items: center; gap: 8px; }
.l0 { padding-left: 20px; }
.l1 { padding-left: 38px; }
.l2 { padding-left: 56px; }
.l3 { padding-left: 74px; }
.l4 { padding-left: 92px; }
.tw { width: 12px; height: 14px; }
.node {
    display: flex;
    align-items: center;
    height: 20px;
    gap: 9px;
    padding: 0 8px 0 3px;
    background: #c7cacf;
    white-space: nowrap;
}
.node svg { width: 16px; height: 16px; }
.node span { margin-left: 5px; }
.node.short { gap: 8px; }
.node.stale { position: relative; color: #50566a; }
.node.stale::after {
    content: "";
    position: absolute;
    left: 24px;
    right: 0;
    bottom: 2px;
    height: 3px;
    background: repeating-linear-gradient(120deg, #5c6580 0 2px, transparent 2px 8px);
}
.picked, .grayed { display: flex; align-items: center; height: 20px; color: #e3e8ec; }
.picked { gap: 14px; padding: 0 11px 0 3px; margin-left: -3px; background: #1180bb; }
.grayed { height: 16px; padding: 0 10px 0 9px; margin-left: -3px; background: #7b7e82; }
.node input {
    appearance: none;
    width: 13px;
    height: 13px;
    margin-left: -4px;
    border: 1px solid #2f3338;
    border-radius: 50%;
}
.node input:checked { background: radial-gradient(#2f3338 0 2px, transparent 3px); }

.viewcube { position: absolute; top: 18px; right: 25px; }
.axis { font: 12px "DejaVu Sans", sans-serif; }
.axis.z { fill: #7a78d8; }
.axis.x { fill: #d56a75; }
.face text { font: 9px "Open Sans", sans-serif; fill: #6b6f74; }

/* Bottom strip */
.bottom {
    display: grid;
    grid-template-columns: 1fr auto 1fr;
    align-items: center;
    position: relative;
}
.comments { justify-content: space-between; padding: 0 0 0 24px; }
.navbar {
    display: flex;
    align-items: center;
    height: 24px;
    padding-left: 2px;
    background: #c7cacf;
}
.navbar button { gap: 1px; padding-right: 8px; }
.navbar svg { width: 18px; height: 16px; }
.navbar button:has(.caret) { padding-right: 6px; }
.navbar .wide { gap: 3px; }
.navbar button:last-child { padding-right: 4px; }
.machining { padding-right: 21px; text-align: right; font-weight: 700; }

/* Taskbar */
.taskbar {
    display: flex;
    height: 40px;
    background: linear-gradient(90deg, #24363e, #24333a 40%, #26292b 72%, #1d2f37 82%, #1c2f37);
    color: #eef1f2;
    font: 14px "Open Sans", sans-serif;
}
.start { width: 48px; }
.search {
    display: flex;
    align-items: center;
    gap: 11px;
    width: 344px;
    padding-left: 12px;
    background: #f2f2f2;
    border: 1px solid #d5d7d8;
    border-width: 1px 0;
}
.search input {
    flex: 1;
    background: none;
    border: none;
    outline: none;
    font: inherit;
}
.search input::placeholder { color: #333; opacity: 1; }
.apps { display: flex; flex: 1; }
.apps button { width: 49px; position: relative; }
.apps .current { background: #56626a; }
.apps .running::after {
    content: "";
    position: absolute;
    left: 4px;
    right: 4px;
    bottom: 0;
    height: 2px;
    background: #76b9ed;
}
.apps .current::after { left: 0; right: 0; }
.tray { display: flex; align-items: center; gap: 16px; }
.weather { gap: 10px; margin-right: 3px; font-size: 13px; }
.clock {
    display: flex;
    flex-direction: column;
    align-items: center;
    width: 60px;
    margin-left: -3px;
    font-size: 11px;
    line-height: 18px;
}
.notify {
    height: 40px;
    padding-right: 19px;
    margin-right: 4px;
    border-right: 1px solid #6b777d;
}

/* Open dialog */
.dialog {
    position: absolute;
    inset: 147px 274px 194px 273px;
    display: flex;
    flex-direction: column;
    background: #fff;
    color: #777;
}
.dialog-head {
    display: flex;
    align-items: center;
    justify-content: space-between;
    height: 84px;
    padding: 8px 28px 0 29px;
    border-bottom: 1px solid #ccc;
}
.dialog-head h2 { color: #606060; font-size: 24px; font-weight: 400; }
.dialog-body { display: flex; flex: 1; min-height: 0; }
.places {
    width: 469px;
    padding-top: 50px;
    border-right: 1px solid #ccc;
    border-bottom: 1px solid #ccc;
    font: 14px/30px "Noto Sans", sans-serif;
}
.places h3 { padding-left: 29px; font-size: 20px; font-weight: 500; line-height: 30px; }
.places a { display: block; padding-left: 33px; }
.places .active { background: #f5f5f6; color: #666; }
.files { display: flex; flex: 1; flex-direction: column; }
.crumb { padding-left: 33px; color: #666; font-size: 12px; line-height: 66px; height: 50px; }
.list-frame {
    position: relative;
    flex: 1;
    min-height: 0;
    border: 1px solid #999;
}
.list { height: 100%; padding-right: 9px; overflow: hidden; }
.list table { width: 100%; border-collapse: collapse; font-size: 14px; table-layout: fixed; }
.list th {
    position: sticky;
    top: 0;
    height: 38px;
    padding-top: 6px;
    background: #fff;
    color: #666;
    font-size: 13px;
}
.list .date { width: 168px; }
.sort {
    position: absolute;
    top: 19px;
    right: 33px;
    border: 5px solid transparent;
    border-top: 0;
    border-bottom: 6px solid #000;
}
.list td { height: 30px; padding-bottom: 2px; white-space: nowrap; }
.list td:first-child { padding-left: 31px; }
.list td svg { display: inline-block; width: 16px; height: 16px; margin-right: 6px; vertical-align: -3px; }
.scrollbar {
    position: absolute;
    top: 38px;
    right: 0;
    bottom: 0;
    width: 8px;
    padding-top: 126px;
}
.thumb { height: 100%; background: #c1c1c1; border-radius: 4px; }
.dialog-foot {
    display: flex;
    justify-content: space-between;
    height: 123px;
    padding: 45px 39px 0;
}
.dialog-foot button {
    height: 34px;
    padding: 0 17px;
    background: #fafafa;
    border: 1px solid #999;
    border-radius: 3px;
    color: #666;
    font-size: 12px;
}
.actions { display: flex; gap: 6px; }
.dialog-foot .primary { background: #a6e0f4; border-color: #a6e0f4; color: #fff; }
.grip { position: absolute; right: 1px; bottom: 0; }
```
